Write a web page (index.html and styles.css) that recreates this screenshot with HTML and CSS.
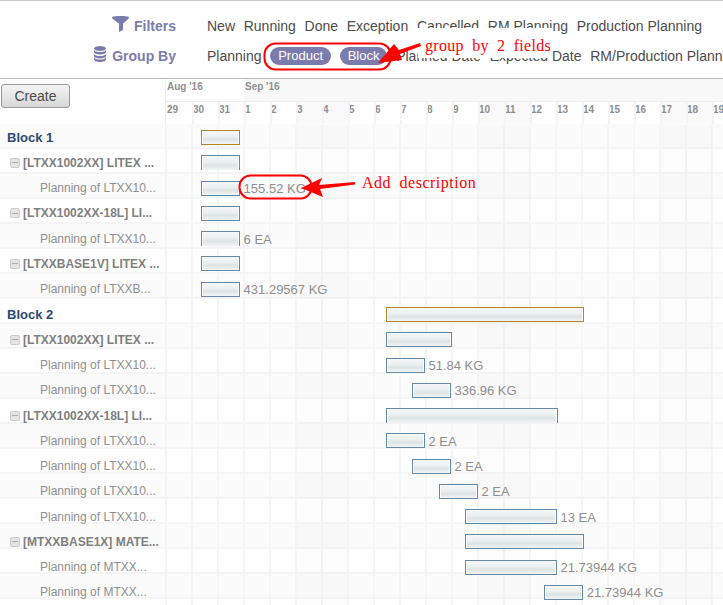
FILE: index.html
```html
<!DOCTYPE html>
<html lang="en">
<head>
    <meta charset="UTF-8">
    <meta name="viewport" content="width=device-width, initial-scale=1.0">
    <title>Planning Gantt</title>
    <link rel="stylesheet" href="styles.css">
</head>
<body>
    <div class="search-panel">
        <div class="search-row">
            <div class="search-title">
                <svg class="search-icon" width="17" height="16" viewBox="0 0 17 16"><path d="M0 1.500C0 .5 3 0 8.500 0S17 .5 17 1.500c0 1-1 2-6 6V14l-4 2V7.500C1 3.500 0 2.500 0 1.500z"/></svg>
                Filters
            </div>
            <div class="search-items">
                <span>New</span><span>Running</span><span>Done</span><span>Exception</span><span>Cancelled</span><span>RM Planning</span><span>Production Planning</span>
            </div>
        </div>
        <div class="search-row">
            <div class="search-title">
                <svg class="search-icon db-icon" width="12" height="16" viewBox="0 0 12 16"><ellipse cx="6" cy="2.500" rx="6" ry="2.500"/><path d="M0 4c1 1.500 3 2 6 2s5-.5 6-2v2c0 1.500-3 2.500-6 2.500S0 7.500 0 6zM0 8c1 1.500 3 2 6 2s5-.5 6-2v2c0 1.500-3 2.500-6 2.500S0 11.500 0 10zM0 11.500c1 1.500 3 2 6 2s5-.5 6-2v2c0 1.500-3 2.500-6 2.500s-6-1-6-2.500z"/></svg>
                Group By
            </div>
            <div class="search-items">
                <span>Planning</span><span class="facet">Product</span><span class="facet">Block</span><span>Planned Date</span><span>Expected Date</span><span>RM/Production Planning</span>
            </div>
        </div>
    </div>

    <div class="gantt">
        <div class="gantt-head">
            <div class="head-left"><button class="create-btn">Create</button></div>
            <div class="head-right">
                <div class="months"><span class="month aug">Aug '16</span><span class="month sep">Sep '16</span></div>
                <div class="days" id="days"></div>
            </div>
        </div>
        <div class="gantt-body" id="rows"></div>
    </div>

    <div class="note note-group">group by 2 fields</div>
    <div class="note note-desc">Add description</div>
    <svg class="marks" width="723" height="605" viewBox="0 0 723 605">
        <rect x="264.500" y="43.500" width="126" height="26" rx="11" class="ring"/>
        <rect x="239.500" y="175.500" width="72" height="23" rx="11" class="ring"/>
        <path d="M420 43 L399 50 L394 44 L378 63 L402 60 L400 54 L421 46z" class="arrow"/>
        <path d="M301 188 L322 178 L319 185 L355 182 L355 184.500 L320 189 L323 197z" class="arrow"/>
    </svg>

    <script>
        var dayNames = [29, 30, 31, 1, 2, 3, 4, 5, 6, 7, 8, 9, 10, 11, 12, 13, 14, 15, 16, 17, 18, 19];
        var dayHtml = '';
        dayNames.forEach(function(d, i) {
            var weekend = (i % 7 === 5 || i % 7 === 6) ? ' day-off' : '';
            dayHtml += '<span class="day' + weekend + '">' + d + '</span>';
        });
        document.getElementById('days').innerHTML = dayHtml;

        // type, label, start day offset, length in days, description, bottom border cut off
        var rows = [
            ['block', 'Block 1', 1.35, 1.5, ''],
            ['group', '[LTXX1002XX] LITEX ...', 1.35, 1.5, '', true],
            ['item', 'Planning of LTXX10...', 1.35, 1.5, '155.52 KG'],
            ['group', '[LTXX1002XX-18L] LI...', 1.35, 1.5, ''],
            ['item', 'Planning of LTXX10...', 1.35, 1.5, '6 EA', true],
            ['group', '[LTXXBASE1V] LITEX ...', 1.35, 1.5, ''],
            ['item', 'Planning of LTXXB...', 1.35, 1.5, '431.29567 KG'],
            ['block', 'Block 2', 8.46, 7.6, ''],
            ['group', '[LTXX1002XX] LITEX ...', 8.46, 2.54, ''],
            ['item', 'Planning of LTXX10...', 8.46, 1.5, '51.84 KG'],
            ['item', 'Planning of LTXX10...', 9.46, 1.5, '336.96 KG'],
            ['group', '[LTXX1002XX-18L] LI...', 8.46, 6.6, '', true],
            ['item', 'Planning of LTXX10...', 8.46, 1.5, '2 EA'],
            ['item', 'Planning of LTXX10...', 9.46, 1.5, '2 EA'],
            ['item', 'Planning of LTXX10...', 10.5, 1.5, '2 EA'],
            ['item', 'Planning of LTXX10...', 11.5, 3.54, '13 EA'],
            ['group', '[MTXXBASE1X] MATE...', 11.5, 4.58, ''],
            ['item', 'Planning of MTXX...', 11.5, 3.54, '21.73944 KG'],
            ['item', 'Planning of MTXX...', 14.55, 1.5, '21.73944 KG']
        ];

        var html = '';
        rows.forEach(function(r) {
            var toggle = r[0] === 'group' ? '<span class="toggle"></span>' : '';
            var desc = r[4] ? '<span class="bar-desc">' + r[4] + '</span>' : '';
            var open = r[5] ? ' bar-open' : '';
            html += '<div class="row row-' + r[0] + '">' +
                '<div class="row-label">' + toggle + r[1] + '</div>' +
                '<div class="row-chart">' +
                '<span class="bar' + open + '" style="margin-left:' + (r[2] * 26) + 'px;width:' + (r[3] * 26) + 'px"></span>' +
                desc + '</div></div>';
        });
        document.getElementById('rows').innerHTML = html;
    </script>
</body>
</html>
```

FILE: styles.css
```css
html, body {
    margin: 0;
    height: 605px;
    overflow: hidden;
}
body {
    position: relative;
    width: 723px;
    font-family: "Liberation Sans", Arial, sans-serif;
    font-size: 14px;
    color: #4c4c4c;
    background: #fff;
}
.search-panel {
    height: 79px;
    box-sizing: border-box;
    padding-top: 10px;
    border-top: 1px solid #ccc;
    border-bottom: 1px solid #bbb;
    white-space: nowrap;
    overflow: hidden;
}
.search-row {
    display: flex;
    height: 30px;
    align-items: center;
}
.search-title {
    width: 176px;
    flex: none;
    display: flex;
    justify-content: flex-end;
    align-items: center;
    gap: 5px;
    font-weight: bold;
    color: #7c7bad;
}
.search-icon {
    fill: #7c7bad;
    margin-top: -4px;
}
.db-icon {
    margin-right: 1px;
}
.search-items {
    display: flex;
    align-items: center;
    gap: 8.7px;
    margin-left: 31px;
}
.facet {
    background: #7c7bad;
    color: #fff;
    font-size: 13px;
    line-height: 18px;
    padding: 0 8px;
    border-radius: 9px;
}
.gantt-head {
    display: flex;
    height: 45px;
}
.head-left {
    width: 165px;
    flex: none;
    padding: 5px 0 0 1px;
    box-sizing: border-box;
}
.create-btn {
    width: 69px;
    height: 24px;
    padding: 0;
    font: 14px "Liberation Sans", Arial, sans-serif;
    color: #4c4c4c;
    background: linear-gradient(#f4f4f4, #d8d8d8);
    border: 1px solid #999;
    border-radius: 3px;
}
.head-right {
    flex: 1;
    min-width: 0;
    overflow: hidden;
    border-left: 1px solid #eee;
}
.months {
    display: flex;
    height: 23px;
    box-sizing: border-box;
    border-bottom: 1px solid #eee;
    color: #8f8f8f;
    font-size: 10px;
    font-weight: bold;
    line-height: 15px;
}
.month {
    box-sizing: border-box;
    padding-left: 1px;
}
.aug {
    width: 78px;
}
.sep {
    flex: 1;
    background: #f8f8f8;
}
.days {
    display: flex;
    height: 22px;
}
.day {
    position: relative;
    flex: none;
    width: 26px;
    box-sizing: border-box;
    padding-left: 1px;
    color: #8f8f8f;
    font-size: 10px;
    font-weight: bold;
    line-height: 15px;
}
.day-off {
    background: #f9f9f9;
}
.day::after {
    content: "";
    position: absolute;
    left: 0;
    top: 0;
    bottom: 0;
    width: 2px;
    background: #f4f4f4;
}
.day:first-child::after {
    display: none;
}
.gantt-body {
    height: 481px;
    box-sizing: border-box;
    padding-top: 1px;
    overflow: hidden;
    background: linear-gradient(#f5f5f5 0 1px, #fbfbfb 1px 24px, #f5f5f5 24px 26px, #fff 26px 49px, #f5f5f5 49px 50px) 0 -1px / 100% 50px repeat-y;
}
.row {
    display: flex;
    height: 25.28px;
}
.row-label {
    width: 165px;
    flex: none;
    box-sizing: border-box;
    display: flex;
    align-items: center;
    font-size: 12px;
    white-space: nowrap;
    overflow: hidden;
    color: #8f8f8f;
}
.row-block .row-label {
    padding-left: 7px;
    font-size: 13px;
    font-weight: bold;
    color: #2c4a75;
}
.row-group .row-label {
    padding-left: 10px;
    font-weight: bold;
    color: #7f7f7f;
}
.row-item .row-label {
    padding-left: 40px;
}
.toggle {
    width: 10px;
    height: 10px;
    margin-right: 3px;
    flex: none;
    box-sizing: border-box;
    border: 1px solid #ccc;
    border-radius: 2px;
    background: linear-gradient(#aaa, #aaa) center / 6px 1px no-repeat, #e4e4e4;
}
.row-chart {
    flex: 1;
    display: flex;
    align-items: center;
    min-width: 0;
    white-space: nowrap;
    border-left: 1px solid #f3f3f3;
    background:
        linear-gradient(90deg, transparent 0 131px, rgba(0, 0, 0, .012) 131px 183px, transparent 183px) 0 0 / 182px 100% repeat-x,
        repeating-linear-gradient(90deg, #f5f5f5 0 1px, transparent 1px 25px, #f5f5f5 25px 26px);
}
.bar {
    flex: none;
    height: 15px;
    box-sizing: border-box;
    border: 1px solid #6389ab;
    background: linear-gradient(#f6f8f8, #eaefef 45%, #dde4e4 65%, #f2f5f5);
    box-shadow: inset 1px 0 0 #fff, inset -1px 0 0 #fff;
}
.bar-open {
    border-bottom: 0;
}
.row-block .bar {
    border-color: #b5842a;
}
.bar-desc {
    margin: 1px 0 0 3.5px;
    font-size: 13px;
    color: #8f8f8f;
}
.marks {
    position: absolute;
    left: 0;
    top: 0;
    pointer-events: none;
}
.ring {
    fill: none;
    stroke: #f00;
    stroke-width: 2;
}
.arrow {
    fill: #f00;
}
.note {
    position: absolute;
    font-family: "Liberation Serif", serif;
    font-size: 16px;
    line-height: 18px;
    color: #f00;
    white-space: nowrap;
    letter-spacing: .5px;
    word-spacing: 4px;
}
.note-group {
    left: 418px;
    top: 28px;
    width: 134px;
    height: 30px;
    box-sizing: border-box;
    padding: 9px 0 0 7px;
    background: #fff;
    letter-spacing: .3px;
}
.note-desc {
    left: 362px;
    top: 174px;
}
```
